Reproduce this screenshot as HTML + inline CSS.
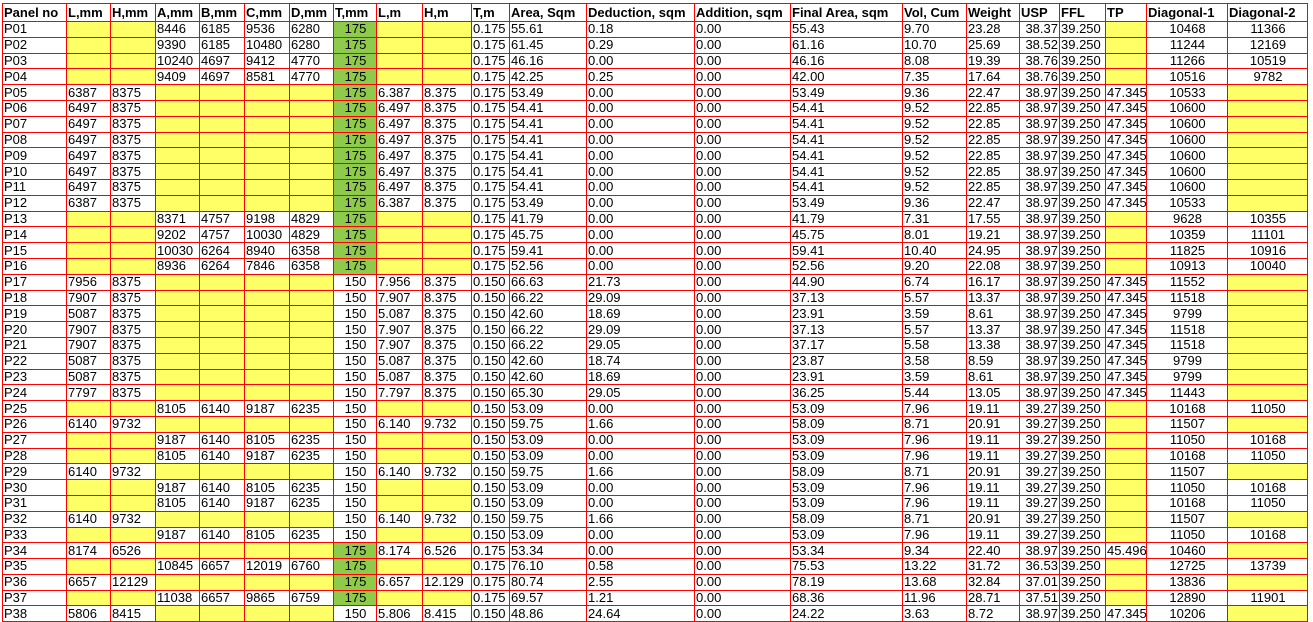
<!DOCTYPE html>
<html><head><meta charset="utf-8"><style>
html,body{margin:0;padding:0;background:#fff;overflow:hidden;width:1313px;height:609px}
table{position:absolute;left:2px;top:3px;border-collapse:collapse;table-layout:fixed;width:1306px;font-family:"Liberation Sans",Arial,sans-serif;font-size:13px;color:#000}
td,th{border:1px solid #ff0000;padding:0 0 0 1px;white-space:nowrap;overflow:hidden;line-height:14px;text-align:left}
th{font-weight:bold;height:17px}
tr{height:15.8px}
td{height:14.8px}
.y{background:#ffff66}
.g{background:#8fcb4a;text-align:center}
.c{text-align:center}
.r{text-align:right;padding-right:1px}
</style></head><body>
<table>
<colgroup>
<col style="width:64px"><col style="width:44px"><col style="width:45px"><col style="width:44px"><col style="width:45px"><col style="width:45px"><col style="width:44px"><col style="width:43px"><col style="width:46px"><col style="width:49px"><col style="width:38px"><col style="width:77px"><col style="width:108px"><col style="width:96px"><col style="width:112px"><col style="width:64px"><col style="width:53px"><col style="width:40px"><col style="width:46px"><col style="width:41px"><col style="width:81px"><col style="width:80px">
</colgroup>
<tr><th>Panel no</th><th>L,mm</th><th>H,mm</th><th>A,mm</th><th>B,mm</th><th>C,mm</th><th>D,mm</th><th>T,mm</th><th>L,m</th><th>H,m</th><th>T,m</th><th>Area, Sqm</th><th>Deduction, sqm</th><th>Addition, sqm</th><th>Final Area, sqm</th><th>Vol, Cum</th><th>Weight</th><th>USP</th><th>FFL</th><th>TP</th><th>Diagonal-1</th><th>Diagonal-2</th></tr>
<tr><td>P01</td><td class="y"></td><td class="y"></td><td>8446</td><td>6185</td><td>9536</td><td>6280</td><td class="g">175</td><td class="y"></td><td class="y"></td><td>0.175</td><td>55.61</td><td>0.18</td><td>0.00</td><td>55.43</td><td>9.70</td><td>23.28</td><td class="r">38.37</td><td>39.250</td><td class="y"></td><td class="c">10468</td><td class="c">11366</td></tr>
<tr><td>P02</td><td class="y"></td><td class="y"></td><td>9390</td><td>6185</td><td>10480</td><td>6280</td><td class="g">175</td><td class="y"></td><td class="y"></td><td>0.175</td><td>61.45</td><td>0.29</td><td>0.00</td><td>61.16</td><td>10.70</td><td>25.69</td><td class="r">38.52</td><td>39.250</td><td class="y"></td><td class="c">11244</td><td class="c">12169</td></tr>
<tr><td>P03</td><td class="y"></td><td class="y"></td><td>10240</td><td>4697</td><td>9412</td><td>4770</td><td class="g">175</td><td class="y"></td><td class="y"></td><td>0.175</td><td>46.16</td><td>0.00</td><td>0.00</td><td>46.16</td><td>8.08</td><td>19.39</td><td class="r">38.76</td><td>39.250</td><td class="y"></td><td class="c">11266</td><td class="c">10519</td></tr>
<tr><td>P04</td><td class="y"></td><td class="y"></td><td>9409</td><td>4697</td><td>8581</td><td>4770</td><td class="g">175</td><td class="y"></td><td class="y"></td><td>0.175</td><td>42.25</td><td>0.25</td><td>0.00</td><td>42.00</td><td>7.35</td><td>17.64</td><td class="r">38.76</td><td>39.250</td><td class="y"></td><td class="c">10516</td><td class="c">9782</td></tr>
<tr><td>P05</td><td>6387</td><td>8375</td><td class="y"></td><td class="y"></td><td class="y"></td><td class="y"></td><td class="g">175</td><td>6.387</td><td>8.375</td><td>0.175</td><td>53.49</td><td>0.00</td><td>0.00</td><td>53.49</td><td>9.36</td><td>22.47</td><td class="r">38.97</td><td>39.250</td><td>47.345</td><td class="c">10533</td><td class="y"></td></tr>
<tr><td>P06</td><td>6497</td><td>8375</td><td class="y"></td><td class="y"></td><td class="y"></td><td class="y"></td><td class="g">175</td><td>6.497</td><td>8.375</td><td>0.175</td><td>54.41</td><td>0.00</td><td>0.00</td><td>54.41</td><td>9.52</td><td>22.85</td><td class="r">38.97</td><td>39.250</td><td>47.345</td><td class="c">10600</td><td class="y"></td></tr>
<tr><td>P07</td><td>6497</td><td>8375</td><td class="y"></td><td class="y"></td><td class="y"></td><td class="y"></td><td class="g">175</td><td>6.497</td><td>8.375</td><td>0.175</td><td>54.41</td><td>0.00</td><td>0.00</td><td>54.41</td><td>9.52</td><td>22.85</td><td class="r">38.97</td><td>39.250</td><td>47.345</td><td class="c">10600</td><td class="y"></td></tr>
<tr><td>P08</td><td>6497</td><td>8375</td><td class="y"></td><td class="y"></td><td class="y"></td><td class="y"></td><td class="g">175</td><td>6.497</td><td>8.375</td><td>0.175</td><td>54.41</td><td>0.00</td><td>0.00</td><td>54.41</td><td>9.52</td><td>22.85</td><td class="r">38.97</td><td>39.250</td><td>47.345</td><td class="c">10600</td><td class="y"></td></tr>
<tr><td>P09</td><td>6497</td><td>8375</td><td class="y"></td><td class="y"></td><td class="y"></td><td class="y"></td><td class="g">175</td><td>6.497</td><td>8.375</td><td>0.175</td><td>54.41</td><td>0.00</td><td>0.00</td><td>54.41</td><td>9.52</td><td>22.85</td><td class="r">38.97</td><td>39.250</td><td>47.345</td><td class="c">10600</td><td class="y"></td></tr>
<tr><td>P10</td><td>6497</td><td>8375</td><td class="y"></td><td class="y"></td><td class="y"></td><td class="y"></td><td class="g">175</td><td>6.497</td><td>8.375</td><td>0.175</td><td>54.41</td><td>0.00</td><td>0.00</td><td>54.41</td><td>9.52</td><td>22.85</td><td class="r">38.97</td><td>39.250</td><td>47.345</td><td class="c">10600</td><td class="y"></td></tr>
<tr><td>P11</td><td>6497</td><td>8375</td><td class="y"></td><td class="y"></td><td class="y"></td><td class="y"></td><td class="g">175</td><td>6.497</td><td>8.375</td><td>0.175</td><td>54.41</td><td>0.00</td><td>0.00</td><td>54.41</td><td>9.52</td><td>22.85</td><td class="r">38.97</td><td>39.250</td><td>47.345</td><td class="c">10600</td><td class="y"></td></tr>
<tr><td>P12</td><td>6387</td><td>8375</td><td class="y"></td><td class="y"></td><td class="y"></td><td class="y"></td><td class="g">175</td><td>6.387</td><td>8.375</td><td>0.175</td><td>53.49</td><td>0.00</td><td>0.00</td><td>53.49</td><td>9.36</td><td>22.47</td><td class="r">38.97</td><td>39.250</td><td>47.345</td><td class="c">10533</td><td class="y"></td></tr>
<tr><td>P13</td><td class="y"></td><td class="y"></td><td>8371</td><td>4757</td><td>9198</td><td>4829</td><td class="g">175</td><td class="y"></td><td class="y"></td><td>0.175</td><td>41.79</td><td>0.00</td><td>0.00</td><td>41.79</td><td>7.31</td><td>17.55</td><td class="r">38.97</td><td>39.250</td><td class="y"></td><td class="c">9628</td><td class="c">10355</td></tr>
<tr><td>P14</td><td class="y"></td><td class="y"></td><td>9202</td><td>4757</td><td>10030</td><td>4829</td><td class="g">175</td><td class="y"></td><td class="y"></td><td>0.175</td><td>45.75</td><td>0.00</td><td>0.00</td><td>45.75</td><td>8.01</td><td>19.21</td><td class="r">38.97</td><td>39.250</td><td class="y"></td><td class="c">10359</td><td class="c">11101</td></tr>
<tr><td>P15</td><td class="y"></td><td class="y"></td><td>10030</td><td>6264</td><td>8940</td><td>6358</td><td class="g">175</td><td class="y"></td><td class="y"></td><td>0.175</td><td>59.41</td><td>0.00</td><td>0.00</td><td>59.41</td><td>10.40</td><td>24.95</td><td class="r">38.97</td><td>39.250</td><td class="y"></td><td class="c">11825</td><td class="c">10916</td></tr>
<tr><td>P16</td><td class="y"></td><td class="y"></td><td>8936</td><td>6264</td><td>7846</td><td>6358</td><td class="g">175</td><td class="y"></td><td class="y"></td><td>0.175</td><td>52.56</td><td>0.00</td><td>0.00</td><td>52.56</td><td>9.20</td><td>22.08</td><td class="r">38.97</td><td>39.250</td><td class="y"></td><td class="c">10913</td><td class="c">10040</td></tr>
<tr><td>P17</td><td>7956</td><td>8375</td><td class="y"></td><td class="y"></td><td class="y"></td><td class="y"></td><td class="c">150</td><td>7.956</td><td>8.375</td><td>0.150</td><td>66.63</td><td>21.73</td><td>0.00</td><td>44.90</td><td>6.74</td><td>16.17</td><td class="r">38.97</td><td>39.250</td><td>47.345</td><td class="c">11552</td><td class="y"></td></tr>
<tr><td>P18</td><td>7907</td><td>8375</td><td class="y"></td><td class="y"></td><td class="y"></td><td class="y"></td><td class="c">150</td><td>7.907</td><td>8.375</td><td>0.150</td><td>66.22</td><td>29.09</td><td>0.00</td><td>37.13</td><td>5.57</td><td>13.37</td><td class="r">38.97</td><td>39.250</td><td>47.345</td><td class="c">11518</td><td class="y"></td></tr>
<tr><td>P19</td><td>5087</td><td>8375</td><td class="y"></td><td class="y"></td><td class="y"></td><td class="y"></td><td class="c">150</td><td>5.087</td><td>8.375</td><td>0.150</td><td>42.60</td><td>18.69</td><td>0.00</td><td>23.91</td><td>3.59</td><td>8.61</td><td class="r">38.97</td><td>39.250</td><td>47.345</td><td class="c">9799</td><td class="y"></td></tr>
<tr><td>P20</td><td>7907</td><td>8375</td><td class="y"></td><td class="y"></td><td class="y"></td><td class="y"></td><td class="c">150</td><td>7.907</td><td>8.375</td><td>0.150</td><td>66.22</td><td>29.09</td><td>0.00</td><td>37.13</td><td>5.57</td><td>13.37</td><td class="r">38.97</td><td>39.250</td><td>47.345</td><td class="c">11518</td><td class="y"></td></tr>
<tr><td>P21</td><td>7907</td><td>8375</td><td class="y"></td><td class="y"></td><td class="y"></td><td class="y"></td><td class="c">150</td><td>7.907</td><td>8.375</td><td>0.150</td><td>66.22</td><td>29.05</td><td>0.00</td><td>37.17</td><td>5.58</td><td>13.38</td><td class="r">38.97</td><td>39.250</td><td>47.345</td><td class="c">11518</td><td class="y"></td></tr>
<tr><td>P22</td><td>5087</td><td>8375</td><td class="y"></td><td class="y"></td><td class="y"></td><td class="y"></td><td class="c">150</td><td>5.087</td><td>8.375</td><td>0.150</td><td>42.60</td><td>18.74</td><td>0.00</td><td>23.87</td><td>3.58</td><td>8.59</td><td class="r">38.97</td><td>39.250</td><td>47.345</td><td class="c">9799</td><td class="y"></td></tr>
<tr><td>P23</td><td>5087</td><td>8375</td><td class="y"></td><td class="y"></td><td class="y"></td><td class="y"></td><td class="c">150</td><td>5.087</td><td>8.375</td><td>0.150</td><td>42.60</td><td>18.69</td><td>0.00</td><td>23.91</td><td>3.59</td><td>8.61</td><td class="r">38.97</td><td>39.250</td><td>47.345</td><td class="c">9799</td><td class="y"></td></tr>
<tr><td>P24</td><td>7797</td><td>8375</td><td class="y"></td><td class="y"></td><td class="y"></td><td class="y"></td><td class="c">150</td><td>7.797</td><td>8.375</td><td>0.150</td><td>65.30</td><td>29.05</td><td>0.00</td><td>36.25</td><td>5.44</td><td>13.05</td><td class="r">38.97</td><td>39.250</td><td>47.345</td><td class="c">11443</td><td class="y"></td></tr>
<tr><td>P25</td><td class="y"></td><td class="y"></td><td>8105</td><td>6140</td><td>9187</td><td>6235</td><td class="c">150</td><td class="y"></td><td class="y"></td><td>0.150</td><td>53.09</td><td>0.00</td><td>0.00</td><td>53.09</td><td>7.96</td><td>19.11</td><td class="r">39.27</td><td>39.250</td><td class="y"></td><td class="c">10168</td><td class="c">11050</td></tr>
<tr><td>P26</td><td>6140</td><td>9732</td><td class="y"></td><td class="y"></td><td class="y"></td><td class="y"></td><td class="c">150</td><td>6.140</td><td>9.732</td><td>0.150</td><td>59.75</td><td>1.66</td><td>0.00</td><td>58.09</td><td>8.71</td><td>20.91</td><td class="r">39.27</td><td>39.250</td><td class="y"></td><td class="c">11507</td><td class="y"></td></tr>
<tr><td>P27</td><td class="y"></td><td class="y"></td><td>9187</td><td>6140</td><td>8105</td><td>6235</td><td class="c">150</td><td class="y"></td><td class="y"></td><td>0.150</td><td>53.09</td><td>0.00</td><td>0.00</td><td>53.09</td><td>7.96</td><td>19.11</td><td class="r">39.27</td><td>39.250</td><td class="y"></td><td class="c">11050</td><td class="c">10168</td></tr>
<tr><td>P28</td><td class="y"></td><td class="y"></td><td>8105</td><td>6140</td><td>9187</td><td>6235</td><td class="c">150</td><td class="y"></td><td class="y"></td><td>0.150</td><td>53.09</td><td>0.00</td><td>0.00</td><td>53.09</td><td>7.96</td><td>19.11</td><td class="r">39.27</td><td>39.250</td><td class="y"></td><td class="c">10168</td><td class="c">11050</td></tr>
<tr><td>P29</td><td>6140</td><td>9732</td><td class="y"></td><td class="y"></td><td class="y"></td><td class="y"></td><td class="c">150</td><td>6.140</td><td>9.732</td><td>0.150</td><td>59.75</td><td>1.66</td><td>0.00</td><td>58.09</td><td>8.71</td><td>20.91</td><td class="r">39.27</td><td>39.250</td><td class="y"></td><td class="c">11507</td><td class="y"></td></tr>
<tr><td>P30</td><td class="y"></td><td class="y"></td><td>9187</td><td>6140</td><td>8105</td><td>6235</td><td class="c">150</td><td class="y"></td><td class="y"></td><td>0.150</td><td>53.09</td><td>0.00</td><td>0.00</td><td>53.09</td><td>7.96</td><td>19.11</td><td class="r">39.27</td><td>39.250</td><td class="y"></td><td class="c">11050</td><td class="c">10168</td></tr>
<tr><td>P31</td><td class="y"></td><td class="y"></td><td>8105</td><td>6140</td><td>9187</td><td>6235</td><td class="c">150</td><td class="y"></td><td class="y"></td><td>0.150</td><td>53.09</td><td>0.00</td><td>0.00</td><td>53.09</td><td>7.96</td><td>19.11</td><td class="r">39.27</td><td>39.250</td><td class="y"></td><td class="c">10168</td><td class="c">11050</td></tr>
<tr><td>P32</td><td>6140</td><td>9732</td><td class="y"></td><td class="y"></td><td class="y"></td><td class="y"></td><td class="c">150</td><td>6.140</td><td>9.732</td><td>0.150</td><td>59.75</td><td>1.66</td><td>0.00</td><td>58.09</td><td>8.71</td><td>20.91</td><td class="r">39.27</td><td>39.250</td><td class="y"></td><td class="c">11507</td><td class="y"></td></tr>
<tr><td>P33</td><td class="y"></td><td class="y"></td><td>9187</td><td>6140</td><td>8105</td><td>6235</td><td class="c">150</td><td class="y"></td><td class="y"></td><td>0.150</td><td>53.09</td><td>0.00</td><td>0.00</td><td>53.09</td><td>7.96</td><td>19.11</td><td class="r">39.27</td><td>39.250</td><td class="y"></td><td class="c">11050</td><td class="c">10168</td></tr>
<tr><td>P34</td><td>8174</td><td>6526</td><td class="y"></td><td class="y"></td><td class="y"></td><td class="y"></td><td class="g">175</td><td>8.174</td><td>6.526</td><td>0.175</td><td>53.34</td><td>0.00</td><td>0.00</td><td>53.34</td><td>9.34</td><td>22.40</td><td class="r">38.97</td><td>39.250</td><td>45.496</td><td class="c">10460</td><td class="y"></td></tr>
<tr><td>P35</td><td class="y"></td><td class="y"></td><td>10845</td><td>6657</td><td>12019</td><td>6760</td><td class="g">175</td><td class="y"></td><td class="y"></td><td>0.175</td><td>76.10</td><td>0.58</td><td>0.00</td><td>75.53</td><td>13.22</td><td>31.72</td><td class="r">36.53</td><td>39.250</td><td class="y"></td><td class="c">12725</td><td class="c">13739</td></tr>
<tr><td>P36</td><td>6657</td><td>12129</td><td class="y"></td><td class="y"></td><td class="y"></td><td class="y"></td><td class="g">175</td><td>6.657</td><td>12.129</td><td>0.175</td><td>80.74</td><td>2.55</td><td>0.00</td><td>78.19</td><td>13.68</td><td>32.84</td><td class="r">37.01</td><td>39.250</td><td class="y"></td><td class="c">13836</td><td class="y"></td></tr>
<tr><td>P37</td><td class="y"></td><td class="y"></td><td>11038</td><td>6657</td><td>9865</td><td>6759</td><td class="g">175</td><td class="y"></td><td class="y"></td><td>0.175</td><td>69.57</td><td>1.21</td><td>0.00</td><td>68.36</td><td>11.96</td><td>28.71</td><td class="r">37.51</td><td>39.250</td><td class="y"></td><td class="c">12890</td><td class="c">11901</td></tr>
<tr><td>P38</td><td>5806</td><td>8415</td><td class="y"></td><td class="y"></td><td class="y"></td><td class="y"></td><td class="c">150</td><td>5.806</td><td>8.415</td><td>0.150</td><td>48.86</td><td>24.64</td><td>0.00</td><td>24.22</td><td>3.63</td><td>8.72</td><td class="r">38.97</td><td>39.250</td><td>47.345</td><td class="c">10206</td><td class="y"></td></tr>
</table>
</body></html>
